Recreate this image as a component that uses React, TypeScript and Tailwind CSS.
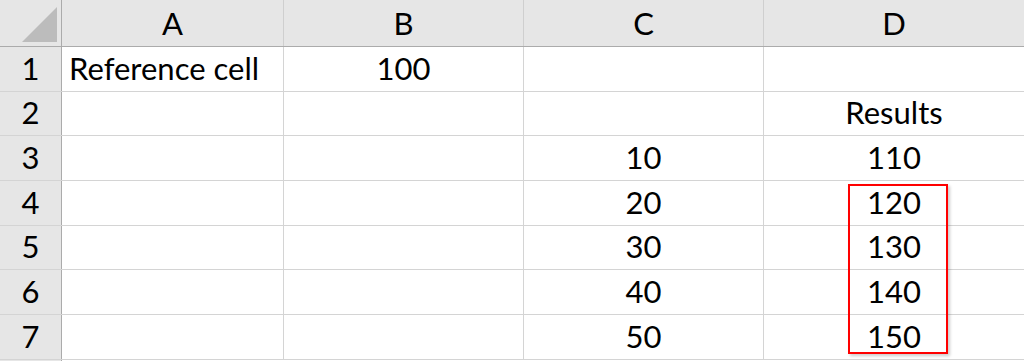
import React from 'react';

const columns = [
    { key: 'A', width: 'w-[222px]', align: 'justify-start pl-[7px]' },
    { key: 'B', width: 'w-[240px]', align: 'justify-center' },
    { key: 'C', width: 'w-[240px]', align: 'justify-center' },
    { key: 'D', width: 'flex-1', align: 'justify-center' },
];

interface Row {
    n: number;
    h: string;
    cells: string[];
}

const rows: Row[] = [
    { n: 1, h: 'h-[45px]', cells: ['Reference cell', '100', '', ''] },
    { n: 2, h: 'h-[44px]', cells: ['', '', '', 'Results'] },
    { n: 3, h: 'h-[45px]', cells: ['', '', '10', '110'] },
    { n: 4, h: 'h-[45px]', cells: ['', '', '20', '120'] },
    { n: 5, h: 'h-[44px]', cells: ['', '', '30', '130'] },
    { n: 6, h: 'h-[45px]', cells: ['', '', '40', '140'] },
    { n: 7, h: 'h-[45px]', cells: ['', '', '50', '150'] },
];

export default function App() {
    return (
        <div className="relative w-[1024px] h-[361px] overflow-hidden bg-white text-black text-[31px] leading-none font-['Lato','Liberation_Sans',sans-serif]">
            {/* column headers */}
            <div className="flex h-[47px] bg-[#e6e6e6] border-b border-[#ababab]">
                <div className="w-[62px] border-r border-[#ababab] flex items-end justify-end pr-[3px] pb-[3px]">
                    <svg width="36" height="36" viewBox="0 0 36 36">
                        <polygon points="35,0 35,35 0,35" fill="#bcbcbc" />
                    </svg>
                </div>
                {columns.map((col) => (
                    <div
                        key={col.key}
                        className={`${col.width} flex items-end justify-center pb-[7px] ${col.key !== 'D' ? 'border-r border-[#cfcfcf]' : ''}`}
                    >
                        {col.key}
                    </div>
                ))}
            </div>

            {rows.map((row) => (
                <div key={row.n} className={`flex ${row.h} border-b border-[#d4d4d4]`}>
                    <div className="w-[62px] bg-[#e6e6e6] border-r border-[#ababab] flex items-end justify-center pb-[7px]">
                        {row.n}
                    </div>
                    {row.cells.map((value, i) => (
                        <div
                            key={columns[i].key}
                            className={`${columns[i].width} flex items-end ${columns[i].align} pb-[7px] ${i < 3 ? 'border-r border-[#d4d4d4]' : ''}`}
                        >
                            {value}
                        </div>
                    ))}
                </div>
            ))}
            <div className="flex h-[4px]">
                <div className="w-[62px] bg-[#e6e6e6] border-r border-[#ababab]" />
            </div>

            {/* highlighted result range */}
            <div className="absolute left-[848px] top-[184px] w-[100px] h-[170px] border-2 border-[#ff0000] shadow-[2px_2px_3px_rgba(0,0,0,0.2)]" />
        </div>
    );
}
